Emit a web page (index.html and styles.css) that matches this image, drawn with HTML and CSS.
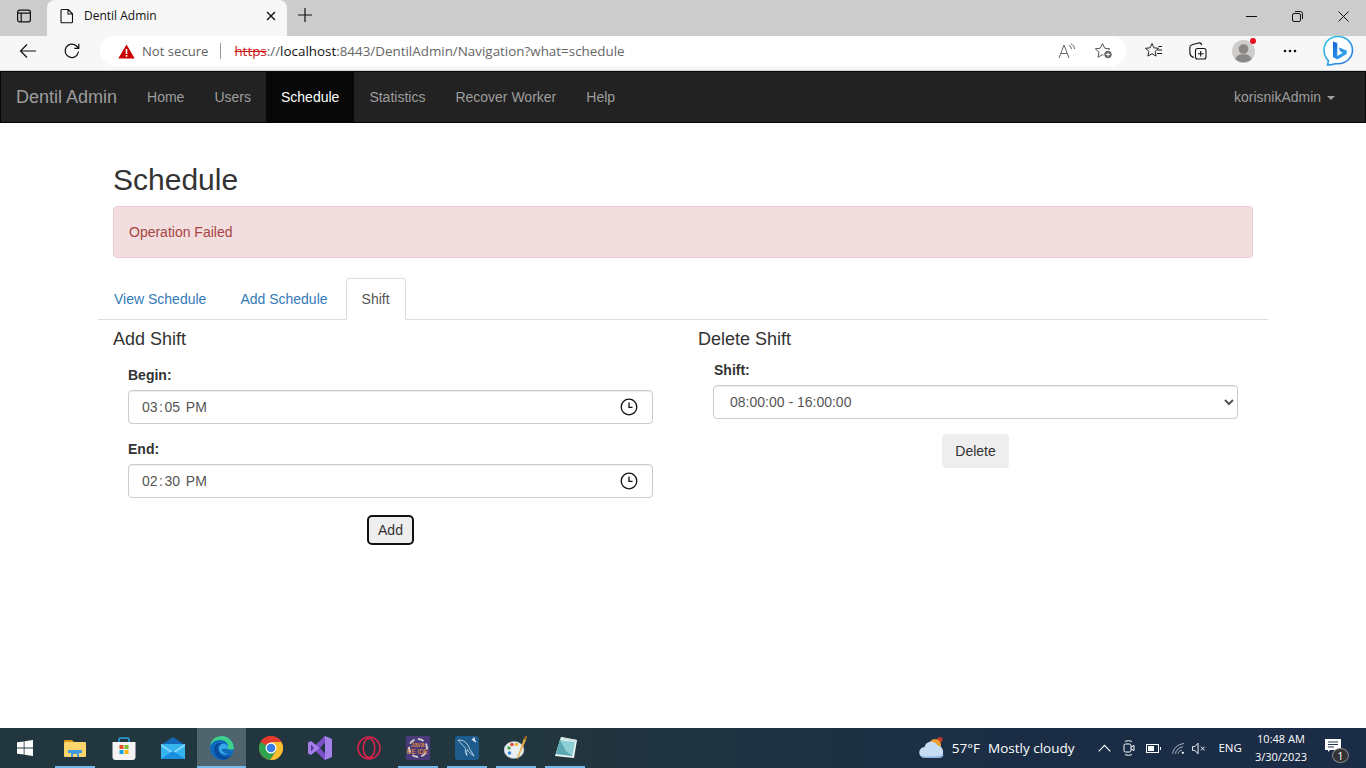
FILE: index.html
```html
<!DOCTYPE html>
<html lang="en">
<head>
    <meta charset="UTF-8">
    <meta name="viewport" content="width=device-width, initial-scale=1.0">
    <title>Dentil Admin</title>
    <link rel="stylesheet" href="styles.css">
</head>
<body>
    <div class="window">
        <!-- Tab strip -->
        <div class="tabstrip">
            <div class="strip-btn">
                <svg width="16" height="16" viewBox="0 0 16 16" fill="none" stroke="#111" stroke-width="1.2"><rect x="1.600" y="2.100" width="12.800" height="11.800" rx="2.200"/><path d="M1.600 5.200h12.800M5.200 5.200v8.700"/></svg>
            </div>
            <div class="browser-tab">
                <svg width="14" height="16" viewBox="0 0 14 16" fill="none" stroke="#111" stroke-width="1.100"><path d="M2 1.500h6.200L12.500 5.800v8a1 1 0 0 1-1 1h-9.500a1 1 0 0 1-1-1v-11.300a1 1 0 0 1 1-1zM8 1.500v4.500h4.500"/></svg>
                <span class="tab-title">Dentil Admin</span>
                <svg class="tab-close" width="10" height="10" viewBox="0 0 10 10" stroke="#111" stroke-width="1.400"><path d="M1 1l8 8M9 1l-8 8"/></svg>
            </div>
            <div class="new-tab">
                <svg width="16" height="16" viewBox="0 0 16 16" stroke="#111" stroke-width="1.200"><path d="M8 1v14M1 8h14"/></svg>
            </div>
            <div class="window-controls">
                <div class="win-btn"><svg width="11" height="11" viewBox="0 0 11 11" stroke="#111"><path d="M0 5.500h11"/></svg></div>
                <div class="win-btn"><svg width="11" height="11" viewBox="0 0 11 11" fill="none" stroke="#111"><rect x="0.500" y="2.500" width="8" height="8" rx="1.500"/><path d="M3 .500h5.500a2 2 0 0 1 2 2V8"/></svg></div>
                <div class="win-btn"><svg width="11" height="11" viewBox="0 0 11 11" stroke="#111"><path d="M.5.500l10 10M10.500.500l-10 10"/></svg></div>
            </div>
        </div>

        <!-- Address bar -->
        <div class="toolbar">
            <div class="tool tool-back">
                <svg width="18" height="16" viewBox="0 0 18 16" fill="none" stroke="#111" stroke-width="1.200"><path d="M17 8H1.500M8 1.500L1.500 8 8 14.500"/></svg>
            </div>
            <div class="tool tool-reload">
                <svg width="18" height="18" viewBox="0 0 18 18" fill="none" stroke="#111" stroke-width="1.200"><path d="M15.500 9.500a6.700 6.700 0 1 1-2-5.500l2 2M15.800 1.800V6.300H11.300"/></svg>
            </div>
            <div class="address">
                <svg class="warn" width="17" height="15" viewBox="0 0 17 15"><path d="M8.500 0.500L16.700 14.500H.3z" fill="#c80000"/><path d="M7.700 5h1.600v5H7.700zM7.700 11h1.600v1.700H7.700z" fill="#fff"/></svg>
                <span class="not-secure">Not secure</span>
                <span class="addr-sep"></span>
                <span class="url"><span class="url-https">https</span>://<span class="url-host">localhost</span>:8443/DentilAdmin/Navigation?what=schedule</span>
                <svg class="addr-read" width="18" height="16" viewBox="0 0 18 16" fill="none" stroke="#666" stroke-width="1"><path d="M1 15L6 2l5 13M2.800 10.500h6.400M11 2.500c1.500.500 2.300 1.700 2.500 3.500M13 .800c2 .800 3.400 2.700 3.700 5.200"/></svg>
                <svg class="addr-star" width="20" height="18" viewBox="0 0 20 18" fill="none" stroke="#555" stroke-width="1"><path d="M8.500 1.500l2.200 4.700 5 .6-3.700 3.400 1 5-4.500-2.500-4.500 2.500 1-5L1.300 6.800l5-.6z"/><circle cx="14" cy="12.500" r="4.200" fill="#666" stroke="#fff"/><path d="M12 12.500h4M14 10.500v4" stroke="#fff"/></svg>
            </div>
            <div class="tool tool-fav">
                <svg width="18" height="18" viewBox="0 0 18 18" fill="none" stroke="#111" stroke-width=".9"><path d="M7 1.500l1.900 4.300 4.600.5-3.400 3.100 1 4.700-4.100-2.400-4.100 2.400 1-4.700L.5 6.300l4.600-.5z"/><path d="M13.500 4.500h3.500M12.500 8h4.500M12 11.500h5" stroke-width="1"/></svg>
            </div>
            <div class="tool tool-coll">
                <svg width="18" height="18" viewBox="0 0 18 18" fill="none" stroke="#111" stroke-width="1.100"><path d="M5 15.500c-2-.5-3.500-1.500-4-3.500L.8 6c-.1-1.500.7-2.800 2.200-3.200L9.500 1c1.500-.3 2.800.5 3.300 2"/><rect x="6.500" y="6.500" width="10.500" height="10.500" rx="2"/><path d="M11.700 9v5.500M9 11.700h5.500"/></svg>
            </div>
            <div class="tool tool-avatar">
                <svg width="23" height="23" viewBox="0 0 23 23"><circle cx="11.500" cy="11.500" r="11.500" fill="#cfcdcb"/><circle cx="11.500" cy="9" r="4.800" fill="#8a8886"/><path d="M3.500 19c1-3.600 4-4.800 8-4.800s7 1.200 8 4.800a11.500 11.500 0 0 1-16 0z" fill="#8a8886"/></svg>
                <span class="avatar-dot"></span>
            </div>
            <div class="tool tool-more">
                <svg width="14" height="4" viewBox="0 0 14 4" fill="#111"><circle cx="2" cy="2" r="1.300"/><circle cx="7" cy="2" r="1.300"/><circle cx="12" cy="2" r="1.300"/></svg>
            </div>
            <div class="tool tool-bing">
                <svg width="32" height="32" viewBox="0 0 32 32">
                    <defs>
                        <linearGradient id="bingRing" x1="0" y1="0" x2="1" y2="1"><stop offset="0" stop-color="#2fd0f0"/><stop offset="1" stop-color="#2a6fe0"/></linearGradient>
                        <linearGradient id="bingB" x1="0" y1="0" x2="1" y2="1"><stop offset="0" stop-color="#1560d8"/><stop offset="1" stop-color="#38b8f0"/></linearGradient>
                    </defs>
                    <path d="M16 1.500C8 1.500 2 7.500 2 15c0 5.500 2.800 9.200 4.500 11l-1 4c3.500 0 6.500-.8 9-1.500 1 .2 1 .2 1.500.2 8 0 14.500-6 14.500-13.700S24 1.500 16 1.500z" fill="#fff" stroke="url(#bingRing)" stroke-width="1.600"/>
                    <path d="M11 6.500l4.300 1.500v13l5.500-3.200-2.500-1.200-1.500-4 8 3v3.400l-9.500 5.500-4.300-2.500z" fill="url(#bingB)"/>
                </svg>
            </div>
        </div>

        <!-- Site navbar -->
        <nav class="navbar">
            <a class="navbar-brand">Dentil Admin</a>
            <a class="nav-link">Home</a>
            <a class="nav-link">Users</a>
            <a class="nav-link active">Schedule</a>
            <a class="nav-link">Statistics</a>
            <a class="nav-link">Recover Worker</a>
            <a class="nav-link">Help</a>
            <a class="nav-link nav-user">korisnikAdmin <span class="caret"></span></a>
        </nav>

        <!-- Page content -->
        <main class="container">
            <h1 class="page-title">Schedule</h1>
            <div class="alert">Operation Failed</div>
            <ul class="nav-tabs">
                <li><a>View Schedule</a></li>
                <li><a>Add Schedule</a></li>
                <li class="active"><a>Shift</a></li>
            </ul>
            <div class="row">
                <section class="col">
                    <h4>Add Shift</h4>
                    <form class="form form-add">
                        <div class="form-group">
                            <label>Begin:</label>
                            <input class="form-control" type="time" value="15:05">
                        </div>
                        <div class="form-group">
                            <label>End:</label>
                            <input class="form-control" type="time" value="14:30">
                        </div>
                        <div class="form-actions">
                            <button type="button" class="btn btn-focus">Add</button>
                        </div>
                    </form>
                </section>
                <section class="col">
                    <h4>Delete Shift</h4>
                    <form class="form form-delete">
                        <div class="form-group">
                            <label>Shift:</label>
                            <select class="form-control">
                                <option>08:00:00 - 16:00:00</option>
                            </select>
                        </div>
                        <div class="form-actions">
                            <button type="button" class="btn">Delete</button>
                        </div>
                    </form>
                </section>
            </div>
        </main>

        <!-- Windows taskbar -->
        <footer class="taskbar">
            <div class="task task-start">
                <svg width="16" height="16" viewBox="0 0 16 16" fill="#fff"><path d="M0 2.300l6.700-.9v6.200H0zM7.500 1.300L16 0v7.600H7.500zM0 8.400h6.700v6.200L0 13.700zM7.500 8.400H16V16l-8.500-1.200z"/></svg>
            </div>
            <div class="task open">
                <svg width="22" height="18" viewBox="0 0 22 18"><path d="M0 2a1 1 0 0 1 1-1h7l2 2H0z" fill="#d99a14"/><rect y="3" width="22" height="15" rx="1" fill="#fbd56b"/><path d="M4 11h14v3h-3v4H7v-4H4z" fill="#3f9be0"/><rect x="9" y="15" width="4" height="3" fill="#fbd56b"/></svg>
            </div>
            <div class="task">
                <svg width="24" height="24" viewBox="0 0 24 24"><path d="M7 6V3.500A1.500 1.500 0 0 1 8.500 2h7A1.500 1.500 0 0 1 17 3.500V6" fill="none" stroke="#2aa7e0" stroke-width="1.500"/><path d="M.500 6h23v15a3 3 0 0 1-3 3h-17a3 3 0 0 1-3-3z" fill="#f3f3f3"/><rect x="7.500" y="9" width="4" height="4" fill="#e74c24"/><rect x="12.500" y="9" width="4" height="4" fill="#7cbb2a"/><rect x="7.500" y="14" width="4" height="4" fill="#1ba0e2"/><rect x="12.500" y="14" width="4" height="4" fill="#fdb813"/></svg>
            </div>
            <div class="task">
                <svg width="24" height="22" viewBox="0 0 24 22"><path d="M12 0l12 8H0z" fill="#1166b8"/><path d="M0 7h24v15H0z" fill="#35b4f0"/><path d="M0 7l12 8 12-8v2L12 17 0 9z" fill="#8adcff"/><path d="M0 22l12-8 12 8z" fill="#1a8ede"/></svg>
            </div>
            <div class="task active open">
                <svg width="24" height="24" viewBox="0 0 24 24"><circle cx="12" cy="12" r="12" fill="#0f6cbd"/><path d="M24 13C24 6 19 0 12 0 5 0 1 4 0 10c2-4 6-6 10-6 5 0 8 3 8 6 0 1-.5 2-1.500 2.500 3 1.500 7.500 1 7.500.500z" fill="#3fd08a"/><path d="M4 13c0-4 3-6 6-6 1 0 2 .2 3 .7-2 0-4.500 2-4.500 5.300 0 4 3.500 7.500 8 7.500 2 0 3.500-.5 5-1.500-2 3-5 4.500-8 4.500-5 0-9.500-5-9.500-10.500z" fill="#0a4a9c"/><path d="M8.500 13c0-3.300 2.500-5.300 4.500-5.300 3 0 5 2 5 3 0 1.500-1.500 2-3 2h-2c-1 0-1.500 1-1 2 1 1.500 3 2.800 5.500 2.800-2 2-8.500 1-8.500-4.500z" fill="#36a6e8"/></svg>
            </div>
            <div class="task">
                <svg width="24" height="24" viewBox="0 0 24 24"><circle cx="12" cy="12" r="12" fill="#e33b2e"/><path d="M12 12L22.400 6A12 12 0 0 0 1.600 6L6.800 15z" fill="#e33b2e"/><path d="M1.600 6A12 12 0 0 0 11 24l6.200-9z" fill="#2ea44f"/><path d="M12 6h10.400A12 12 0 0 1 11 24l6.200-9z" fill="#fbc02d"/><circle cx="12" cy="12" r="5.500" fill="#fff"/><circle cx="12" cy="12" r="4.300" fill="#3a7de8"/></svg>
            </div>
            <div class="task">
                <svg width="24" height="24" viewBox="0 0 24 24"><path d="M17 0l7 3v18l-7 3-9-9-5 4-3-1.500v-11L3 5l5 4z" fill="#a57fe8"/><path d="M17 0v24l-9-9 3.500-3L8 9z" fill="#7b4fc9"/><path d="M3 8.500L6 12l-3 3.500z" fill="#5a359c"/><path d="M17 6.500L12 12l5 5.500z" fill="#1f3540"/></svg>
            </div>
            <div class="task">
                <svg width="24" height="24" viewBox="0 0 24 24" fill="none" stroke="#d9214a" stroke-width="1.600"><circle cx="12" cy="12" r="11"/><ellipse cx="12" cy="12" rx="5.800" ry="9.500"/></svg>
            </div>
            <div class="task open">
                <div class="ide-icon"><span class="ide-gear"></span><span class="ide-text">Java EE IDE</span></div>
            </div>
            <div class="task open">
                <svg width="24" height="24" viewBox="0 0 24 24"><rect width="24" height="24" rx="3" fill="#1d5c8c"/><path d="M3 4c4 0 7 1 9 4 2 2 2 5 4 7l3 5-4-3c-1-1-2-2-2.500-3.500-1 2-1 4-.5 6-1.500-2-2-4-1.500-7C9 10 6 8 3 4z" fill="none" stroke="#c8dbe8" stroke-width=".9"/><path d="M17 3l4 3M19 1.500l.5 4" stroke="#e8f0f5" stroke-width="1.400"/></svg>
            </div>
            <div class="task open">
                <svg width="24" height="26" viewBox="0 0 24 26"><ellipse cx="10" cy="15" rx="10" ry="8.500" fill="#e9eef3" stroke="#9fb3c4" stroke-width=".6"/><circle cx="5" cy="13" r="1.800" fill="#4fa64a"/><circle cx="8" cy="9.500" r="1.800" fill="#e24a3a"/><circle cx="12.500" cy="9.500" r="1.800" fill="#efb92f"/><circle cx="5.500" cy="18" r="1.800" fill="#3c84d6"/><path d="M23 1l-2.500 1-8 22 1.500-.5L22 5z" fill="#e8b04a"/><path d="M20.500 2L23 1l-1 4-2.500-1z" fill="#8a5a2a"/></svg>
            </div>
            <div class="task open">
                <svg width="24" height="24" viewBox="0 0 24 24"><path d="M8 1l16 3-3 18-19-2z" fill="#eef5f4"/><path d="M7 4L22 6l-2.500 14L3 18z" fill="#8fd0d6"/><path d="M7 4L3 18l16.500 2L13 15z" fill="#5ba8b2"/><path d="M8 1l16 3-.4 2L7.500 3z" fill="#cfe3e3"/></svg>
            </div>

            <div class="tray">
                <svg class="tray-weather" width="26" height="24" viewBox="0 0 26 24"><circle cx="21" cy="3.500" r="2.600" fill="#c9372c"/><circle cx="16" cy="9" r="6" fill="#f0a030"/><path d="M6 22a5.500 5.500 0 0 1-.5-11 7 7 0 0 1 13-1.500A6.500 6.500 0 0 1 20 22z" fill="#c6ddf4"/><path d="M1 19c3 2 14 2 24 0-1 2-3 3-5 3H6c-2 0-4-1-5-3z" fill="#89b5e0"/></svg>
                <span class="tray-temp">57°F</span>
                <span class="tray-weather-text">Mostly cloudy</span>
                <svg class="tray-up" width="13" height="8" viewBox="0 0 13 8" fill="none" stroke="#fff" stroke-width="1.100"><path d="M.700 7.300l5.800-6 5.800 6"/></svg>
                <svg class="tray-cam" width="12" height="18" viewBox="0 0 12 18" fill="none" stroke="#fff"><rect x="1" y="5" width="7" height="8" rx="1.500"/><path d="M8 8l3-1.500v5L8 10M2 2.500c2-1 5-1 7 0M2 15.500c2 1 5 1 7 0"/></svg>
                <svg class="tray-batt" width="15" height="9" viewBox="0 0 15 9" fill="none" stroke="#fff"><rect x=".5" y=".5" width="12" height="8"/><rect x="2" y="2" width="6" height="5" fill="#fff" stroke="none"/><path d="M14.500 3v3"/></svg>
                <svg class="tray-wifi" width="13" height="13" viewBox="0 0 15 13" fill="none" stroke="#d8dde2" stroke-width=".9"><path d="M.8 12.500C1.500 6.500 6.500 1.500 14 .8M4 12.500c.6-4 3.500-7 8.500-8M7 12.500c.3-2 2-3.700 4.500-4.200"/><circle cx="12.500" cy="11.500" r="1.300" fill="#fff" stroke="none"/></svg>
                <svg class="tray-vol" width="14" height="13" viewBox="0 0 15 13" fill="none" stroke="#fff"><path d="M.5 4.500h2.500L6.500.8v11.400L3 8.500H.5zM9.500 4.500l4 4M13.500 4.500l-4 4"/></svg>
                <span class="tray-lang">ENG</span>
                <div class="tray-clock"><span>10:48 AM</span><span>3/30/2023</span></div>
                <div class="tray-notify">
                    <svg width="16" height="14" viewBox="0 0 16 14"><path d="M0 0h16v11H5l-2 2v-2H0z" fill="#fff"/><path d="M3 3h10M3 5.500h10M3 8h6" stroke="#23384a" stroke-width="1"/></svg>
                    <span class="notify-badge">1</span>
                </div>
            </div>
        </footer>
    </div>
</body>
</html>
```

FILE: styles.css
```css
:root {
    --link-color: #337ab7;
    --text-dark: #333;
    --border-color: #ddd;
    --navbar-text: #9d9d9d;
}

* {
    margin: 0;
    padding: 0;
    box-sizing: border-box;
}

html, body {
    height: 100%;
    overflow: hidden;
}

body {
    font-family: 'Liberation Sans', Arial, sans-serif;
    font-size: 14px;
    line-height: 20px;
    color: var(--text-dark);
    background: white;
}

.window {
    display: flex;
    flex-direction: column;
    height: 768px;
}

/* Browser tab strip */
.tabstrip {
    display: flex;
    align-items: flex-start;
    height: 36px;
    background: #cccccc;
    font-family: 'Open Sans', sans-serif;
}

.strip-btn {
    display: flex;
    align-items: center;
    justify-content: center;
    width: 47px;
    height: 32px;
}

.browser-tab {
    display: flex;
    align-items: center;
    width: 240px;
    height: 36px;
    padding: 0 11px 4px 13px;
    background: #f7f7f7;
    border-radius: 8px 8px 0 0;
}

.tab-title {
    flex: 1;
    margin-left: 10px;
    font-size: 12px;
    color: #111;
}

.new-tab {
    display: flex;
    align-items: center;
    justify-content: center;
    width: 36px;
    height: 30px;
}

.window-controls {
    display: flex;
    margin-left: auto;
    height: 32px;
}

.win-btn {
    display: flex;
    align-items: center;
    justify-content: center;
    width: 46px;
}

/* Address bar */
.toolbar {
    display: flex;
    align-items: center;
    height: 35px;
    padding-bottom: 4px;
    background: #f7f7f7;
    border-bottom: 1px solid #d5d5d5;
    font-family: 'Open Sans', sans-serif;
}

.tool {
    display: flex;
    align-items: center;
    justify-content: center;
    position: relative;
}

.tool-back {
    width: 44px;
    margin-left: 6px;
}

.tool-reload {
    width: 44px;
}

.address {
    display: flex;
    align-items: center;
    width: 1026px;
    height: 30px;
    margin-left: 6px;
    padding-left: 18px;
    background: white;
    border-radius: 15px;
    font-size: 13px;
    color: #666;
}

.not-secure {
    margin-left: 7px;
    color: #5f5f5f;
    font-size: 13.1px;
}

.addr-sep {
    width: 1px;
    height: 16px;
    margin: 0 13px 0 12px;
    background: #999;
}

.url {
    font-size: 13.4px;
}

.url-https {
    color: #d01010;
    text-decoration: line-through;
}

.url-host {
    color: #111;
}

.addr-read {
    margin-left: auto;
}

.addr-star {
    margin: 0 12px 0 18px;
}

.tool-fav {
    width: 44px;
    margin-left: 6px;
}

.tool-coll {
    width: 44px;
}

.tool-avatar {
    width: 46px;
}

.tool-more {
    width: 48px;
}

.tool-bing {
    width: 48px;
}

.avatar-dot {
    position: absolute;
    top: -2px;
    right: 10px;
    width: 6px;
    height: 6px;
    border-radius: 50%;
    background: #e81123;
}

/* Site navbar */
.navbar {
    display: flex;
    height: 52px;
    background: #222;
    border: 1px solid #080808;
}

.navbar-brand {
    padding: 15px;
    font-size: 18px;
    color: var(--navbar-text);
}

.nav-link {
    padding: 15px;
    color: var(--navbar-text);
}

.nav-link.active {
    color: white;
    background: #080808;
}

.nav-user {
    margin-left: auto;
    margin-right: 15px;
}

.caret {
    display: inline-block;
    width: 0;
    height: 0;
    margin-left: 2px;
    vertical-align: middle;
    border-top: 4px solid;
    border-left: 4px solid transparent;
    border-right: 4px solid transparent;
}

/* Page content */
.container {
    flex: 1;
    width: 1170px;
    margin: 0 auto;
}

.page-title {
    margin: 37px 15px 6px;
    font-size: 30px;
    font-weight: 500;
    line-height: 40px;
}

.alert {
    margin: 0 15px 20px;
    padding: 15px;
    color: #a94442;
    background: #f2dede;
    border: 1px solid #ebccd1;
    border-radius: 4px;
}

.nav-tabs {
    display: flex;
    list-style: none;
    border-bottom: 1px solid var(--border-color);
}

.nav-tabs li {
    margin-bottom: -1px;
}

.nav-tabs a {
    display: block;
    margin-right: 2px;
    padding: 10px 15px;
    color: var(--link-color);
    border: 1px solid transparent;
    border-radius: 4px 4px 0 0;
}

.nav-tabs .active a {
    color: #555;
    background: white;
    border-color: var(--border-color);
    border-bottom-color: transparent;
}

.row {
    display: grid;
    grid-template-columns: 1fr 1fr;
}

.col {
    padding: 0 15px;
}

h4 {
    margin: 9px 0 11px;
    font-size: 18px;
    font-weight: 500;
    line-height: 20px;
}

.form {
    padding: 0 15px;
}

.form-add {
    padding-top: 5px;
}

.form-delete label {
    margin-left: 1px;
}

.form-group {
    margin-bottom: 15px;
}

label {
    display: block;
    margin-bottom: 5px;
    font-weight: bold;
}

.form-control {
    display: block;
    width: 100%;
    height: 34px;
    padding: 6px 12px;
    font-family: inherit;
    font-size: 14px;
    color: #555;
    background: white;
    border: 1px solid #ccc;
    border-radius: 4px;
    box-shadow: inset 0 1px 1px rgba(0, 0, 0, 0.075);
}

.form-control::-webkit-datetime-edit-text {
    padding: 0 0.5px;
}

.form-control::-webkit-calendar-picker-indicator {
    width: 18px;
    height: 18px;
    margin-right: 2px;
    padding: 0;
    background: url("data:image/svg+xml,%3Csvg xmlns='http://www.w3.org/2000/svg' viewBox='0 0 18 18' fill='none' stroke='%23111'%3E%3Ccircle cx='9' cy='9' r='7.800' stroke-width='1.300'/%3E%3Cpath d='M9 4.500v4.800h3.500' stroke-width='1.300'/%3E%3C/svg%3E") center / 18px 18px no-repeat;
}

.form-actions {
    text-align: center;
}

.btn {
    padding: 6px 12px;
    font-family: inherit;
    font-size: 14px;
    line-height: 20px;
    color: #333;
    background: #eee;
    border: 1px solid #eee;
    border-radius: 4px;
}

.btn-focus {
    margin: 2px;
    padding: 3px 9px;
    border: 2px solid #111;
    border-radius: 5px;
    box-shadow: 0 0 0 2px white;
}

/* Windows taskbar */
.taskbar {
    display: flex;
    align-items: stretch;
    height: 40px;
    background: linear-gradient(90deg, #22363f 0%, #22363f 40%, #1a2d45 75%, #1b2c47 100%);
    color: white;
    font-family: 'Open Sans', sans-serif;
}

.task {
    display: flex;
    align-items: center;
    justify-content: center;
    width: 49px;
}

.task-start {
    width: 50px;
}

.task.open {
    background: linear-gradient(#76b9ed, #76b9ed) center bottom / 40px 2px no-repeat;
}

.task.active {
    background: linear-gradient(#76b9ed, #76b9ed) center bottom / 100% 2px no-repeat, #4f646c;
}

.ide-icon {
    position: relative;
    display: flex;
    align-items: center;
    justify-content: center;
    width: 24px;
    height: 24px;
    background: #4b3a7a;
    border-radius: 1px;
}

.ide-gear {
    position: absolute;
    width: 20px;
    height: 20px;
    border: 2px dashed #cfcfcf;
    border-radius: 50%;
}

.ide-text {
    position: relative;
    width: 24px;
    font-family: 'Liberation Sans', sans-serif;
    font-size: 6.5px;
    line-height: 7px;
    text-align: center;
    color: #f59a2c;
}

.tray {
    display: flex;
    align-items: center;
    margin-left: auto;
    padding-right: 25px;
    font-size: 13.5px;
}

.tray-weather {
    margin-right: 7px;
}

.tray-temp {
    margin-right: 8px;
}

.tray-up {
    margin-left: 24px;
}

.tray-cam {
    margin-left: 12px;
}

.tray-batt {
    margin-left: 11px;
}

.tray-wifi {
    margin-left: 11px;
}

.tray-vol {
    margin-left: 7px;
}

.tray-lang {
    margin-left: 12px;
    font-size: 11.5px;
}

.tray-clock {
    display: flex;
    flex-direction: column;
    align-items: center;
    margin-left: 13px;
    font-size: 11px;
    line-height: 18px;
}

.tray-notify {
    position: relative;
    display: flex;
    margin-left: 18px;
    padding-bottom: 4px;
}

.notify-badge {
    position: absolute;
    left: 7px;
    top: 9px;
    width: 17px;
    height: 15px;
    font-size: 11px;
    line-height: 14px;
    text-align: center;
    background: #333;
    border: 1px solid #888;
    border-radius: 50%;
}

@media (max-width: 768px) {
    .row {
        grid-template-columns: 1fr;
    }
}
```
